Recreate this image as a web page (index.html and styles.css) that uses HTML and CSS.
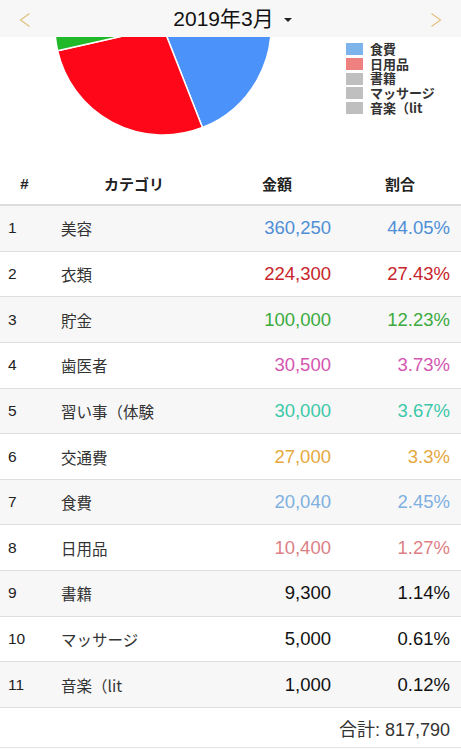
FILE: index.html
```html
<!DOCTYPE html>
<html lang="ja">
<head>
<meta charset="utf-8">
<title>2019年3月</title>
<link rel="stylesheet" href="styles.css">
</head>
<body>
<header class="topbar">
  <svg class="chev" width="12" height="16" viewBox="0 0 12 16"><polyline points="10.5,1.5 1.5,8 10.5,14.5" fill="none" stroke="#e2c17f" stroke-width="1.2"/></svg>
  <div class="title"><span>2019年3月</span><i class="caret"></i></div>
  <svg class="chev" width="12" height="16" viewBox="0 0 12 16"><polyline points="1.5,1.5 10.5,8 1.5,14.5" fill="none" stroke="#e2c17f" stroke-width="1.2"/></svg>
</header>

<section class="chart">
  <svg class="pie" width="290" height="123" viewBox="0 0 290 123">
    <g stroke="#fff" stroke-width="1.5" stroke-linejoin="round">
      <path d="M163,-10 L163,-118 A108,108 0 0 1 202.44,90.54 Z" fill="#4c92fb"/>
      <path d="M163,-10 L202.44,90.54 A108,108 0 0 1 57.62,13.69 Z" fill="#fe0718"/>
      <path d="M163,-10 L57.62,13.69 A108,108 0 0 1 70.78,-66.20 Z" fill="#21b82a"/>
      <path d="M163,-10 L70.78,-66.20 A108,108 0 0 1 163,-118 Z" fill="#d85aae"/>
    </g>
  </svg>
  <ul class="legend">
    <li><span class="box c-food"></span>食費</li>
    <li><span class="box c-daily"></span>日用品</li>
    <li><span class="box c-gray"></span>書籍</li>
    <li><span class="box c-gray"></span>マッサージ</li>
    <li><span class="box c-gray"></span>音楽（lit</li>
  </ul>
</section>

<div class="table">
  <div class="row head">
    <div class="c-num">#</div>
    <div class="c-cat">カテゴリ</div>
    <div class="c-amt">金額</div>
    <div class="c-pct">割合</div>
  </div>
  <div class="row odd t-beauty"><div class="c-num">1</div><div class="c-cat">美容</div><div class="c-amt">360,250</div><div class="c-pct">44.05%</div></div>
  <div class="row t-clothes"><div class="c-num">2</div><div class="c-cat">衣類</div><div class="c-amt">224,300</div><div class="c-pct">27.43%</div></div>
  <div class="row odd t-save"><div class="c-num">3</div><div class="c-cat">貯金</div><div class="c-amt">100,000</div><div class="c-pct">12.23%</div></div>
  <div class="row t-dentist"><div class="c-num">4</div><div class="c-cat">歯医者</div><div class="c-amt">30,500</div><div class="c-pct">3.73%</div></div>
  <div class="row odd t-lesson"><div class="c-num">5</div><div class="c-cat">習い事（体験</div><div class="c-amt">30,000</div><div class="c-pct">3.67%</div></div>
  <div class="row t-transit"><div class="c-num">6</div><div class="c-cat">交通費</div><div class="c-amt">27,000</div><div class="c-pct">3.3%</div></div>
  <div class="row odd t-food"><div class="c-num">7</div><div class="c-cat">食費</div><div class="c-amt">20,040</div><div class="c-pct">2.45%</div></div>
  <div class="row t-daily"><div class="c-num">8</div><div class="c-cat">日用品</div><div class="c-amt">10,400</div><div class="c-pct">1.27%</div></div>
  <div class="row odd"><div class="c-num">9</div><div class="c-cat">書籍</div><div class="c-amt">9,300</div><div class="c-pct">1.14%</div></div>
  <div class="row"><div class="c-num">10</div><div class="c-cat">マッサージ</div><div class="c-amt">5,000</div><div class="c-pct">0.61%</div></div>
  <div class="row odd"><div class="c-num">11</div><div class="c-cat">音楽（lit</div><div class="c-amt">1,000</div><div class="c-pct">0.12%</div></div>
  <div class="total">合計: 817,790</div>
</div>
</body>
</html>
```
FILE: styles.css
```css
* { box-sizing: border-box; }
html, body { margin: 0; padding: 0; background: #fff; }
body {
  font-family: "Liberation Sans", "Noto Sans CJK JP", sans-serif;
  color: #222;
  width: 461px;
  overflow: hidden;
}
.topbar {
  height: 37px;
  background: #f7f7f7;
  display: flex;
  align-items: center;
  justify-content: space-between;
  padding: 0 19px 0 19px;
}
.chev { display: block; margin-top: 2px; }
.title {
  display: flex;
  align-items: center;
  gap: 10px;
  font-size: 21px;
  line-height: 26px;
  color: #111;
  margin-left: 4px;
}
.caret {
  display: block;
  width: 0; height: 0;
  border-left: 4px solid transparent;
  border-right: 4px solid transparent;
  border-top: 4px solid #222;
  margin-top: 2px;
}
.chart {
  height: 123px;
  display: flex;
  overflow: hidden;
}
.pie { display: block; flex: none; }
.legend {
  list-style: none;
  margin: 0;
  padding: 5px 0 0 56px;
  font-family: "Noto Sans CJK JP", sans-serif;
  font-size: 13px;
  line-height: 14.7px;
  font-weight: 700;
  color: #333;
}
.legend li {
  display: flex;
  align-items: center;
  height: 14.7px;
  gap: 7px;
}
.box { width: 17px; height: 12px; display: block; flex: none; }
.c-food { background: #7db4ec; }
.c-daily { background: #ef8080; }
.c-gray { background: #bfbfbf; }

.row {
  display: grid;
  grid-template-columns: 53px 162px 124px 1fr;
  align-items: center;
  height: 45.65px;
  border-bottom: 1px solid #dedede;
}
.row.odd { background: #f7f7f7; }
.row > div { padding: 0 8px; }
.row .c-pct { padding-right: 11px; text-align: right; }
.row .c-amt { text-align: right; }
.c-num { font-size: 15.5px; color: #222; }
.c-cat { font-size: 15.5px; color: #333; font-family: "Noto Sans CJK JP", sans-serif; }
.c-amt, .c-pct { font-size: 18.5px; color: #111; }
.row.head {
  height: 46px;
  border-bottom: 2px solid #dcdcdc;
  font-weight: bold;
  padding-top: 3px;
}
.row.head > div {
  text-align: center;
  font-size: 15px;
  font-family: "Noto Sans CJK JP", sans-serif;
  font-weight: 700;
  color: #222;
}
.row.head .c-pct { padding-right: 8px; }
.row.head .c-num { font-family: "Liberation Sans", sans-serif; padding-right: 12px; }

.t-beauty .c-amt, .t-beauty .c-pct { color: #4f8fd6; }
.t-clothes .c-amt, .t-clothes .c-pct { color: #c8242b; }
.t-save .c-amt, .t-save .c-pct { color: #3bab3e; }
.t-dentist .c-amt, .t-dentist .c-pct { color: #d456b0; }
.t-lesson .c-amt, .t-lesson .c-pct { color: #3cc8a8; }
.t-transit .c-amt, .t-transit .c-pct { color: #e5a83e; }
.t-food .c-amt, .t-food .c-pct { color: #7eb0e0; }
.t-daily .c-amt, .t-daily .c-pct { color: #dc7f86; }

.total {
  height: 40px;
  border-bottom: 1px solid #e3e3e3;
  display: flex;
  align-items: center;
  justify-content: flex-end;
  padding-right: 11px;
  font-size: 18px;
  color: #333;
}
```
